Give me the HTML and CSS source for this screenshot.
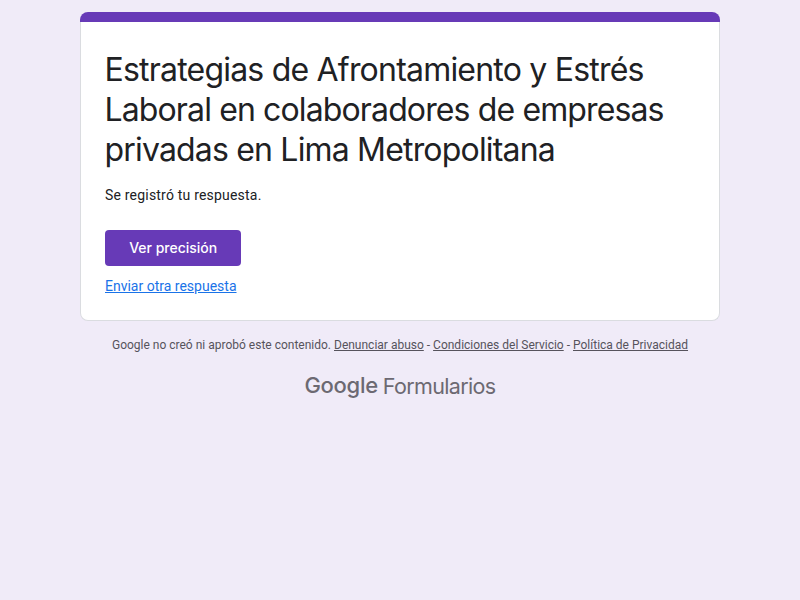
FILE: index.html
```html
<!DOCTYPE html>
<html lang="es">
<head>
<meta charset="utf-8">
<title>Formulario</title>
<link rel="stylesheet" href="styles.css">
</head>
<body>
<main class="page">
  <div class="strip"></div>
  <section class="card">
    <h1 class="title"><span class="line l1">Estrategias de Afrontamiento y Estrés</span> <span class="line l2">Laboral en colaboradores de empresas</span> <span class="line l3">privadas en Lima Metropolitana</span></h1>
    <p class="message">Se registró tu respuesta.</p>
    <a class="button"><span class="label">Ver precisión</span></a>
    <a class="again">Enviar otra respuesta</a>
  </section>
  <footer class="footer">
    <p class="legal">Google no creó ni aprobó este contenido. <a>Denunciar abuso</a> - <a>Condiciones del Servicio</a> - <a>Política de Privacidad</a></p>
    <div class="brand"><span class="google">Google</span><span class="forms">Formularios</span></div>
  </footer>
</main>
</body>
</html>
```
FILE: styles.css
```css
* { box-sizing: border-box; }
body { margin: 0; background: #f0ebf8; color: #202124; font-family: Roboto, sans-serif; }
.page { width: 640px; margin: 0 auto; padding-top: 12px; }
.strip { height: 10px; background: #673ab7; border-radius: 8px 8px 0 0; }
.card { height: 299px; background: #fff; border: 1px solid #dadce0; border-top: 0; border-radius: 0 0 8px 8px; padding: 28px 24px 0; }
.title { margin: 0; font: 400 32px/40px Inter, sans-serif; }
.line { display: block; width: max-content; white-space: nowrap; margin-left: -.5px; }
.l1 { letter-spacing: -.79px; }
.l2 { letter-spacing: -.87px; }
.l3 { letter-spacing: -.82px; }
.message { margin: 15px 0 0; font-size: 14px; line-height: 20px; letter-spacing: .2px; }
.button { display: flex; align-items: center; justify-content: center; width: 136.4px; height: 36px; margin-top: 25px; border-radius: 4px; background: #673ab7; color: #fff; font: 500 14px/20px Inter, sans-serif; }
.again { display: block; width: max-content; margin-top: 10px; color: #1a73e8; text-decoration: underline; font-size: 14px; line-height: 20px; }
.legal { margin: 16px 0 0; text-align: center; font-size: 12px; line-height: 16px; color: #56535c; white-space: nowrap; }
.legal a { text-decoration: underline; }
.brand { display: flex; justify-content: center; gap: 5px; margin-top: 19px; color: #6c6972; font: 22px/28px Inter, sans-serif; }
.google { font-weight: 500; letter-spacing: -.3px; margin-top: -1px; }
.forms { font-size: 21.5px; letter-spacing: -.65px; }
```
